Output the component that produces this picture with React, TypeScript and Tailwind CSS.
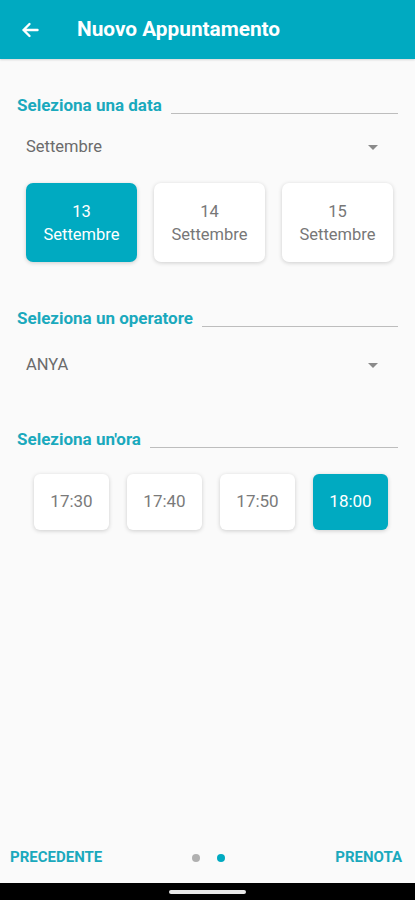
import React, { useState } from "react";

const teal = "bg-[#00aac1]";

function SectionTitle({ label }: { label: string }) {
  return (
    <div className="flex items-end gap-[9px] pl-[17px] pr-[17px]">
      <span className="text-[17px] font-bold leading-[20px] text-[#1aa9bd] whitespace-nowrap">{label}</span>
      <div className="flex-1 h-px bg-[#bdbdbd] mb-[1px]" />
    </div>
  );
}

function Select({ value }: { value: string }) {
  return (
    <div className="flex items-center justify-between pl-[26px] pr-[37px] h-[20px]">
      <span className="text-[16.5px] text-[#6b6b6b]">{value}</span>
      <span className="w-0 h-0 border-l-[5px] border-r-[5px] border-t-[5px] border-l-transparent border-r-transparent border-t-[#8a8a8a]" />
    </div>
  );
}

export default function App() {
  const [day, setDay] = useState(13);
  const [hour, setHour] = useState("18:00");
  const days = [13, 14, 15];
  const hours = ["17:30", "17:40", "17:50", "18:00"];

  return (
    <div className="w-[415px] h-[900px] flex flex-col bg-[#fafafa]" style={{ fontFamily: "Roboto, 'Noto Sans', sans-serif" }}>
      <div className={`${teal} h-[59px] flex items-center shrink-0 shadow-[0_1px_2px_rgba(0,0,0,0.15)]`}>
        <svg className="ml-[21px]" width="18" height="16" viewBox="0 0 18 16" fill="none" stroke="white" strokeWidth="2.4" strokeLinecap="round" strokeLinejoin="round">
          <path d="M16.5 8H2.5M8.5 2L2.5 8l6 6" />
        </svg>
        <span className="ml-[38px] text-[20.8px] font-bold text-white">Nuovo Appuntamento</span>
      </div>

      <div className="flex-1 flex flex-col">
        <div className="mt-[36px]">
          <SectionTitle label="Seleziona una data" />
        </div>
        <div className="mt-[22px]">
          <Select value="Settembre" />
        </div>
        <div className="flex gap-[17px] pl-[26px] mt-[26px]">
          {days.map((d) => {
            const on = d === day;
            return (
              <button
                key={d}
                onClick={() => setDay(d)}
                className={`w-[111px] h-[79px] rounded-[7px] flex flex-col items-center justify-center shadow-[0_1px_4px_rgba(0,0,0,0.18)] ${on ? "bg-[#00aac1] text-white" : "bg-white text-[#777777]"}`}
              >
                <span className="text-[16.5px] leading-[23px]">{d}</span>
                <span className="text-[16.5px] leading-[23px]">Settembre</span>
              </button>
            );
          })}
        </div>

        <div className="mt-[46px]">
          <SectionTitle label="Seleziona un operatore" />
        </div>
        <div className="mt-[27px]">
          <Select value="ANYA" />
        </div>

        <div className="mt-[54px]">
          <SectionTitle label="Seleziona un'ora" />
        </div>
        <div className="flex gap-[18px] pl-[34px] mt-[25px]">
          {hours.map((h) => {
            const on = h === hour;
            return (
              <button
                key={h}
                onClick={() => setHour(h)}
                className={`w-[75px] h-[56px] rounded-[6px] flex items-center justify-center text-[17px] shadow-[0_1px_4px_rgba(0,0,0,0.18)] ${on ? "bg-[#00aac1] text-white" : "bg-white text-[#7a7a7a]"}`}
              >
                {h}
              </button>
            );
          })}
        </div>
      </div>

      <div className="h-[50px] flex items-center px-[10px] pr-[13px] shrink-0 pb-[1px]">
        <span className="text-[15px] font-bold text-[#1aa9bd] w-[100px]">PRECEDENTE</span>
        <div className="flex items-center gap-[17px] ml-[82px]">
          <span className="w-[8px] h-[8px] rounded-full bg-[#b0b0b0]" />
          <span className="w-[8px] h-[8px] rounded-full bg-[#00aac1]" />
        </div>
        <span className="text-[15px] font-bold text-[#1aa9bd] ml-auto">PRENOTA</span>
      </div>
      <div className="h-[17px] bg-black flex items-center justify-center shrink-0">
        <div className="w-[77px] h-[4px] rounded-full bg-[#e8e8e8]" />
      </div>
    </div>
  );
}
